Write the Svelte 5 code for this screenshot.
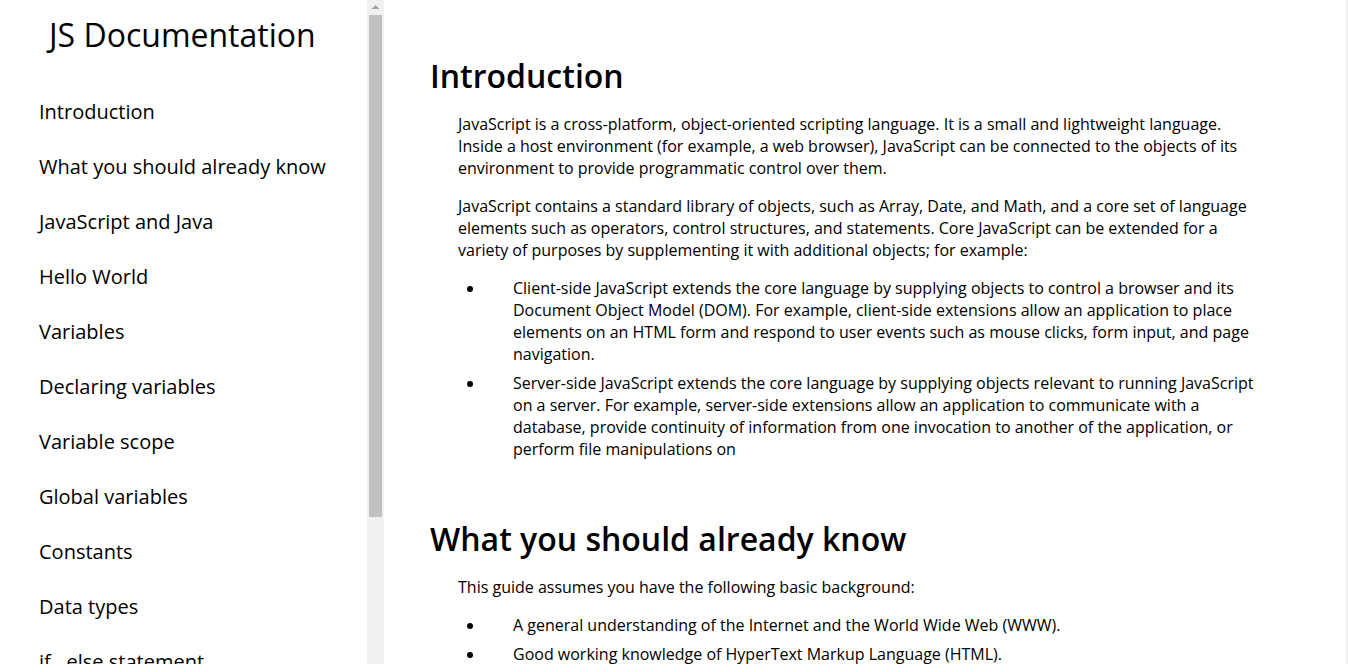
<script>
  const links = ['Introduction', 'What you should already know', 'JavaScript and Java', 'Hello World', 'Variables', 'Declaring variables', 'Variable scope', 'Global variables', 'Constants', 'Data types', 'if...else statement'];
</script>

<div class="page">
  <nav class="sidebar">
    <header>JS Documentation</header>
    {#each links as link}
      <a href={'#' + link.replaceAll(' ', '_')}>{link}</a>
    {/each}
  </nav>
  <div class="scrollbar" aria-hidden="true">
    <svg width="17" height="15" viewBox="0 0 17 15" shape-rendering="crispEdges"><path d="M5 9V8h1V7h1V6h1V5h1v1h1v1h1v1h1v1z" fill="#a3a3a3" /></svg>
    <div class="thumb"></div>
  </div>
  <main>
    <section id="Introduction">
      <h1>Introduction</h1>
      <p>JavaScript is a cross-platform, object-oriented scripting language. It is a small and lightweight language. Inside a host environment (for example, a web browser), JavaScript can be connected to the objects of its environment to provide programmatic control over them.</p>
      <p>JavaScript contains a standard library of objects, such as Array, Date, and Math, and a core set of language elements such as operators, control structures, and statements. Core JavaScript can be extended for a variety of purposes by supplementing it with additional objects; for example:</p>
      <ul>
        <li>Client-side JavaScript extends the core language by supplying objects to control a browser and its Document Object Model (DOM). For example, client-side extensions allow an application to place elements on an HTML form and respond to user events such as mouse clicks, form input, and page navigation.</li>
        <li>Server-side JavaScript extends the core language by supplying objects relevant to running JavaScript on a server. For example, server-side extensions allow an application to communicate with a database, provide continuity of information from one invocation to another of the application, or perform file manipulations on</li>
      </ul>
    </section>
    <section id="What_you_should_already_know">
      <h1>What you should already know</h1>
      <p>This guide assumes you have the following basic background:</p>
      <ul>
        <li>A general understanding of the Internet and the World Wide Web (WWW).</li>
        <li>Good working knowledge of HyperText Markup Language (HTML).</li>
      </ul>
    </section>
  </main>
</div>

<style>
  :global(body) {
    margin: 0;
    background: #fff;
    color: #000;
    font-family: 'Open Sans', sans-serif;
  }
  .page {
    display: flex;
    height: 100vh;
    overflow: hidden;
  }
  .sidebar {
    box-sizing: border-box;
    flex: 0 0 367px;
    overflow: hidden;
  }
  header {
    padding: 13px 0 28px 49px;
    font-size: 32px;
    line-height: 43px;
  }
  .sidebar a {
    display: block;
    padding: 14px 0 14px 39px;
    color: #000;
    font-size: 20px;
    line-height: 27px;
    text-decoration: none;
  }
  .scrollbar {
    flex: 0 0 17px;
    background: #f1f1f1;
  }
  .scrollbar svg {
    display: block;
  }
  .thumb {
    height: 75.6%;
    margin: 0 2px;
    background: #c1c1c1;
  }
  main {
    flex: 1;
    padding: 54px 80px 0 46px;
    border-right: 2px solid #f1f1f1;
  }
  section {
    margin-bottom: 57px;
  }
  h1 {
    margin: 0 0 16px;
    font-size: 32px;
    font-weight: 600;
    line-height: 43px;
  }
  p {
    margin: 0 0 16px 28px;
    font-size: 16px;
    line-height: 22px;
  }
  ul {
    margin: 0 0 0 28px;
    padding: 0 0 0 27px;
  }
  li {
    margin-bottom: 7px;
    padding-left: 28px;
    font-size: 16px;
    line-height: 22px;
  }
</style>
